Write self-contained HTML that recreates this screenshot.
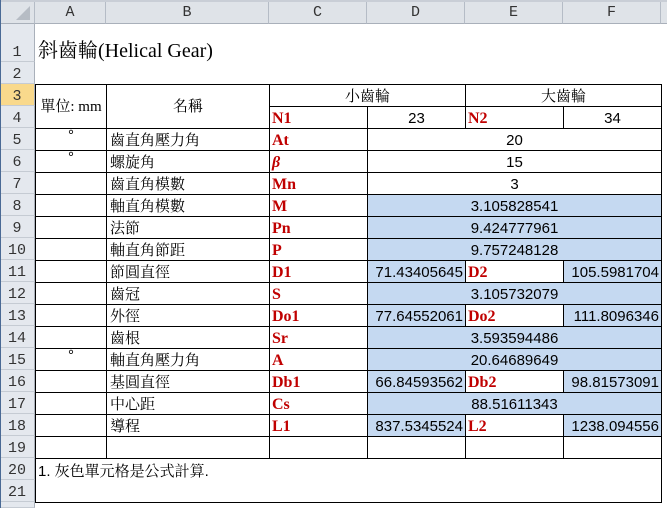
<!DOCTYPE html>
<html style="overflow:hidden;height:508px"><head><meta charset="utf-8"><style>
*{margin:0;padding:0;box-sizing:border-box}
body{width:667px;height:508px;background:#fff;position:relative;overflow:hidden;font-family:"Liberation Sans","Noto Serif CJK TC","Noto Serif CJK SC",serif;font-size:15px;color:#000}
.ch{position:absolute;top:2px;height:22px;background:#dfe3e8;border-right:1px solid #b5bcc6;border-bottom:1px solid #a9b0ba;text-align:center;line-height:22px;font-size:15px;color:#333;font-family:"Liberation Mono",monospace}
.rh{position:absolute;left:0;width:35px;height:22px;background:#e4e8ee;border-bottom:1px solid #c5cbd3;border-right:1px solid #a9b0ba;text-align:center;line-height:26px;font-size:15px;color:#333;font-family:"Liberation Mono",monospace}
.c{position:absolute;border:1px solid #000;line-height:23px;white-space:nowrap;overflow:hidden;padding:0 2px}
.ctr{text-align:center}.r{text-align:right}
.b{background:#c5d9f1}
.red{color:#c00000;font-family:"Liberation Serif",serif;font-weight:bold;font-size:16px}
.t{position:absolute;white-space:nowrap}
</style></head><body>
<div style="position:absolute;left:0;top:0;width:667px;height:2px;background:#c9ced6"></div>
<div style="position:absolute;left:0;top:0;width:1px;height:508px;background:#4a6a95;z-index:2"></div>
<div class="ch" style="left:1px;width:34px"><div style="position:absolute;right:4px;bottom:3px;width:0;height:0;border-left:14px solid transparent;border-bottom:14px solid #b6bcc4"></div></div>
<div class="ch" style="left:35px;width:71px">A</div>
<div class="ch" style="left:106px;width:163px">B</div>
<div class="ch" style="left:269px;width:98px">C</div>
<div class="ch" style="left:367px;width:98px">D</div>
<div class="ch" style="left:465px;width:98px">E</div>
<div class="ch" style="left:563px;width:98px">F</div>
<div class="ch" style="left:661px;width:6px;border-right:none"></div>
<div class="rh" style="top:24px;height:38px;line-height:58px">1</div>
<div class="rh" style="top:62px">2</div>
<div class="rh" style="top:84px;background:#f9d98c">3</div>
<div class="rh" style="top:106px">4</div>
<div class="rh" style="top:128px">5</div>
<div class="rh" style="top:150px">6</div>
<div class="rh" style="top:172px">7</div>
<div class="rh" style="top:194px">8</div>
<div class="rh" style="top:216px">9</div>
<div class="rh" style="top:238px">10</div>
<div class="rh" style="top:260px">11</div>
<div class="rh" style="top:282px">12</div>
<div class="rh" style="top:304px">13</div>
<div class="rh" style="top:326px">14</div>
<div class="rh" style="top:348px">15</div>
<div class="rh" style="top:370px">16</div>
<div class="rh" style="top:392px">17</div>
<div class="rh" style="top:414px">18</div>
<div class="rh" style="top:436px">19</div>
<div class="rh" style="top:458px">20</div>
<div class="rh" style="top:480px">21</div>
<div class="rh" style="top:502px;height:6px"></div>
<div class="t" style="left:38px;top:34px;font-size:20px;font-family:'Liberation Serif','Noto Serif CJK TC',serif">斜齒輪(Helical Gear)</div>

<div class="c ctr" style="left:35px;top:84px;width:72px;height:45px;line-height:44px;font-family:'Liberation Serif','Noto Serif CJK TC',serif">單位: mm</div>
<div class="c ctr" style="left:106px;top:84px;width:164px;height:45px;line-height:44px">名稱</div>
<div class="c ctr" style="left:269px;top:84px;width:197px;height:23px">小齒輪</div>
<div class="c ctr" style="left:465px;top:84px;width:197px;height:23px">大齒輪</div>
<div class="c red" style="left:269px;top:106px;width:99px;height:23px">N1</div>
<div class="c ctr" style="left:367px;top:106px;width:99px;height:23px">23</div>
<div class="c red" style="left:465px;top:106px;width:99px;height:23px">N2</div>
<div class="c ctr" style="left:563px;top:106px;width:99px;height:23px">34</div>

<div id="rows"></div>
<div class="c" style="left:35px;top:458px;width:627px;height:45px;line-height:26px">1. 灰色單元格是公式計算.</div>
<script>
var R=[
["°","齒直角壓力角","At",["20",0]],
["°","螺旋角","β",["15",0]],
["","齒直角模數","Mn",["3",0]],
["","軸直角模數","M",["3.105828541",1]],
["","法節","Pn",["9.424777961",1]],
["","軸直角節距","P",["9.757248128",1]],
["","節圓直徑","D1",["71.43405645","D2","105.5981704"]],
["","齒冠","S",["3.105732079",1]],
["","外徑","Do1",["77.64552061","Do2","111.8096346"]],
["","齒根","Sr",["3.593594486",1]],
["°","軸直角壓力角","A",["20.64689649",1]],
["","基圓直徑","Db1",["66.84593562","Db2","98.81573091"]],
["","中心距","Cs",["88.51611343",1]],
["","導程","L1",["837.5345524","L2","1238.094556"]],
["","","",["","",""]]
];
var h="";
R.forEach(function(r,i){
var y=128+i*22;
h+='<div class="c ctr" style="left:35px;top:'+y+'px;width:72px;height:23px;line-height:14px">'+r[0]+'</div>';
h+='<div class="c" style="left:106px;top:'+y+'px;width:164px;height:23px;padding-left:3px">'+r[1]+'</div>';
h+='<div class="c red" style="left:269px;top:'+y+'px;width:99px;height:23px;'+(r[2]=="β"?'font-style:italic;':'')+'">'+r[2]+'</div>';
var v=r[3];
if(v.length==3){
 var bl=v[0]?' b':'';
 h+='<div class="c r'+bl+'" style="left:367px;top:'+y+'px;width:99px;height:23px">'+v[0]+'</div>';
 h+='<div class="c red" style="left:465px;top:'+y+'px;width:99px;height:23px">'+v[1]+'</div>';
 h+='<div class="c r'+bl+'" style="left:563px;top:'+y+'px;width:99px;height:23px">'+v[2]+'</div>';
}else{
 h+='<div class="c ctr'+(v[1]?' b':'')+'" style="left:367px;top:'+y+'px;width:295px;height:23px">'+v[0]+'</div>';
}
});
document.getElementById("rows").innerHTML=h;
</script>
</body></html>
